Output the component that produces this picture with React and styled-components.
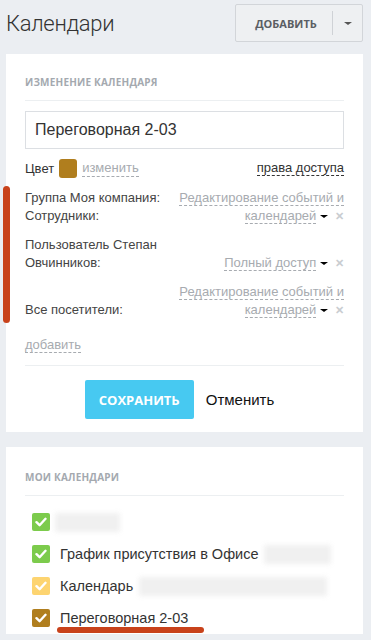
import React from 'react';
import styled, { createGlobalStyle } from 'styled-components';

const Global = createGlobalStyle`
  html, body {
    margin: 0;
    padding: 0;
    background: #ebeef2;
    font-family: "Liberation Sans", Arial, sans-serif;
    color: #333;
  }
`;

const Page = styled.div`
  padding: 4px 8px 0 6px;
  position: relative;
`;

const Header = styled.div`
  display: flex;
  justify-content: space-between;
  align-items: center;
  height: 38px;
  margin-bottom: 12px;
  > h1 {
    margin: 0;
    font-family: Roboto, sans-serif;
    font-weight: 300;
    font-size: 22px;
    color: #333;
    letter-spacing: -0.3px;
  }
`;

const SplitButton = styled.div`
  display: flex;
  align-items: center;
  width: 128px;
  height: 38px;
  box-sizing: border-box;
  background: #eef0f2;
  border: 1px solid #d2d5d9;
  border-radius: 2px;
  > span:first-child {
    flex: 1;
    text-align: center;
    font-family: "Open Sans", sans-serif;
    font-weight: 700;
    font-size: 11px;
    color: #5a5e63;
    padding-left: 4px;
  }
  > i {
    width: 1px;
    height: 24px;
    background: #cfd2d6;
  }
  > span:last-child {
    width: 29px;
    display: flex;
    justify-content: center;
  }
`;

const Caret = styled.span`
  display: inline-block;
  width: 0;
  height: 0;
  border-left: ${p => p.$size || 4}px solid transparent;
  border-right: ${p => p.$size || 4}px solid transparent;
  border-top: ${p => (p.$size || 4) - 0.5}px solid ${p => p.$color || '#000'};
  vertical-align: middle;
`;

const Card = styled.div`
  background: #fff;
  padding: ${p => p.$top}px 19px ${p => p.$bottom}px;
  margin-bottom: 15px;
`;

const SectionTitle = styled.div`
  font-family: "Open Sans", sans-serif;
  font-weight: 700;
  font-size: 10px;
  line-height: 12px;
  letter-spacing: 0.2px;
  color: #a4a9af;
  padding-bottom: 12px;
  border-bottom: 1px solid #eceff1;
`;

const NameInput = styled.input`
  display: block;
  width: 100%;
  box-sizing: border-box;
  margin-top: 10px;
  height: 38px;
  border: 1px solid #dcdfe3;
  padding: 0 9px;
  font-family: "Liberation Sans", Arial, sans-serif;
  font-size: 16px;
  color: #333;
  outline: none;
`;

const ColorRow = styled.div`
  display: flex;
  align-items: center;
  height: 20px;
  margin-top: 9px;
  font-size: 13px;
  > b {
    width: 18px;
    height: 19px;
    border-radius: 3px;
    background: #b07e1e;
    margin: 0 5px;
  }
  > em {
    font-style: normal;
    margin-left: auto;
  }
`;

const Dashed = styled.span`
  color: ${p => p.$color || '#a7abb0'};
  border-bottom: 1px dashed ${p => p.$line || '#a7abb0'};
  line-height: 16px;
`;

const AccessList = styled.div`
  margin-top: 11px;
  display: flex;
  flex-direction: column;
  gap: 11px;
`;

const AccessRow = styled.div`
  display: flex;
  align-items: flex-end;
  font-size: 13px;
  line-height: 18px;
  color: #444;
  > div:first-child {
    flex: 1;
    padding-right: 8px;
  }
  > div:last-child {
    width: 172px;
    text-align: right;
  }
`;

const Remove = styled.span`
  color: #c9cdd1;
  font-weight: 700;
  font-size: 11px;
  margin-left: 7px;
`;

const AddLink = styled.div`
  margin-top: 17px;
  font-size: 13px;
  line-height: 18px;
  padding-bottom: 11px;
  border-bottom: 1px solid #eceff1;
`;

const Actions = styled.div`
  display: flex;
  align-items: center;
  justify-content: center;
  gap: 12px;
  margin-top: 14px;
  padding-right: 10px;
`;

const SaveButton = styled.button`
  width: 109px;
  height: 39px;
  border: none;
  border-radius: 2px;
  background: #47c9f1;
  color: #fff;
  font-family: "Open Sans", sans-serif;
  font-weight: 700;
  font-size: 13px;
`;

const CancelButton = styled.button`
  border: none;
  background: none;
  padding: 0;
  font-family: "Liberation Sans", Arial, sans-serif;
  font-size: 15px;
  color: #111;
`;

const CalList = styled.div`
  margin-top: 10px;
`;

const CalItem = styled.div`
  position: relative;
  display: flex;
  align-items: center;
  height: 32px;
  padding-left: 7px;
  font-size: 14.5px;
  color: #333;
`;

const Check = styled.span`
  width: 18px;
  height: 18px;
  border-radius: 2px;
  background: ${p => p.$color};
  display: flex;
  align-items: center;
  justify-content: center;
  margin-right: 10px;
  flex-shrink: 0;
`;

const Blur = styled.span`
  display: inline-block;
  width: ${p => p.$w}px;
  height: 19px;
  margin-left: ${p => p.$ml || 0}px;
  background: #f0f0f0;
  filter: blur(2.5px);
`;

const Underline = styled.span`
  position: absolute;
  left: 32px;
  bottom: 1px;
  width: 147px;
  height: 6px;
  border-radius: 3px;
  background: #c8421b;
`;

const SideMark = styled.span`
  position: absolute;
  left: 3px;
  top: 186px;
  width: 7px;
  height: 137px;
  border-radius: 4px;
  background: #c8421b;
`;

const Tick = () => (
  <svg width="12" height="10" viewBox="0 0 12 10">
    <path d="M1.5 5.2 L4.6 8.2 L10.5 1.8" fill="none" stroke="#fff" strokeWidth="2.4" strokeLinecap="round" strokeLinejoin="round" />
  </svg>
);

const rights = [
  { who: 'Группа Моя компания: Сотрудники:', level: ['Редактирование событий и', 'календарей'] },
  { who: 'Пользователь Степан Овчинников:', level: ['Полный доступ'] },
  { who: 'Все посетители:', level: ['Редактирование событий и', 'календарей'] },
];

const App = () => (
  <>
    <Global />
    <Page>
      <SideMark />
      <Header>
        <h1>Календари</h1>
        <SplitButton>
          <span>ДОБАВИТЬ</span>
          <i />
          <span><Caret $size={4} $color="#555" /></span>
        </SplitButton>
      </Header>

      <Card $top={22} $bottom={13}>
        <SectionTitle>ИЗМЕНЕНИЕ КАЛЕНДАРЯ</SectionTitle>
        <NameInput defaultValue="Переговорная 2-03" />
        <ColorRow>
          <span>Цвет</span>
          <b />
          <Dashed>изменить</Dashed>
          <em><Dashed $color="#333" $line="#333">права доступа</Dashed></em>
        </ColorRow>
        <AccessList>
          {rights.map(r => (
            <AccessRow key={r.who}>
              <div>{r.who}</div>
              <div>
                {r.level.length > 1 && <><Dashed>{r.level[0]}</Dashed><br /></>}
                <Dashed>{r.level[r.level.length - 1]}</Dashed> <Caret $size={4} />
                <Remove>✕</Remove>
              </div>
            </AccessRow>
          ))}
        </AccessList>
        <AddLink><Dashed>добавить</Dashed></AddLink>
        <Actions>
          <SaveButton>СОХРАНИТЬ</SaveButton>
          <CancelButton>Отменить</CancelButton>
        </Actions>
      </Card>

      <Card $top={24} $bottom={0}>
        <SectionTitle>МОИ КАЛЕНДАРИ</SectionTitle>
        <CalList>
          <CalItem>
            <Check $color="#7ccb4c"><Tick /></Check>
            <Blur $w={65} $ml={-5} />
          </CalItem>
          <CalItem>
            <Check $color="#7ccb4c"><Tick /></Check>
            График присутствия в Офисе
            <Blur $w={67} $ml={5} />
          </CalItem>
          <CalItem>
            <Check $color="#fdd470"><Tick /></Check>
            Календарь
            <Blur $w={188} $ml={6} />
          </CalItem>
          <CalItem>
            <Check $color="#b07e1e"><Tick /></Check>
            Переговорная 2-03
            <Underline />
          </CalItem>
        </CalList>
      </Card>
    </Page>
  </>
);

export default App;
